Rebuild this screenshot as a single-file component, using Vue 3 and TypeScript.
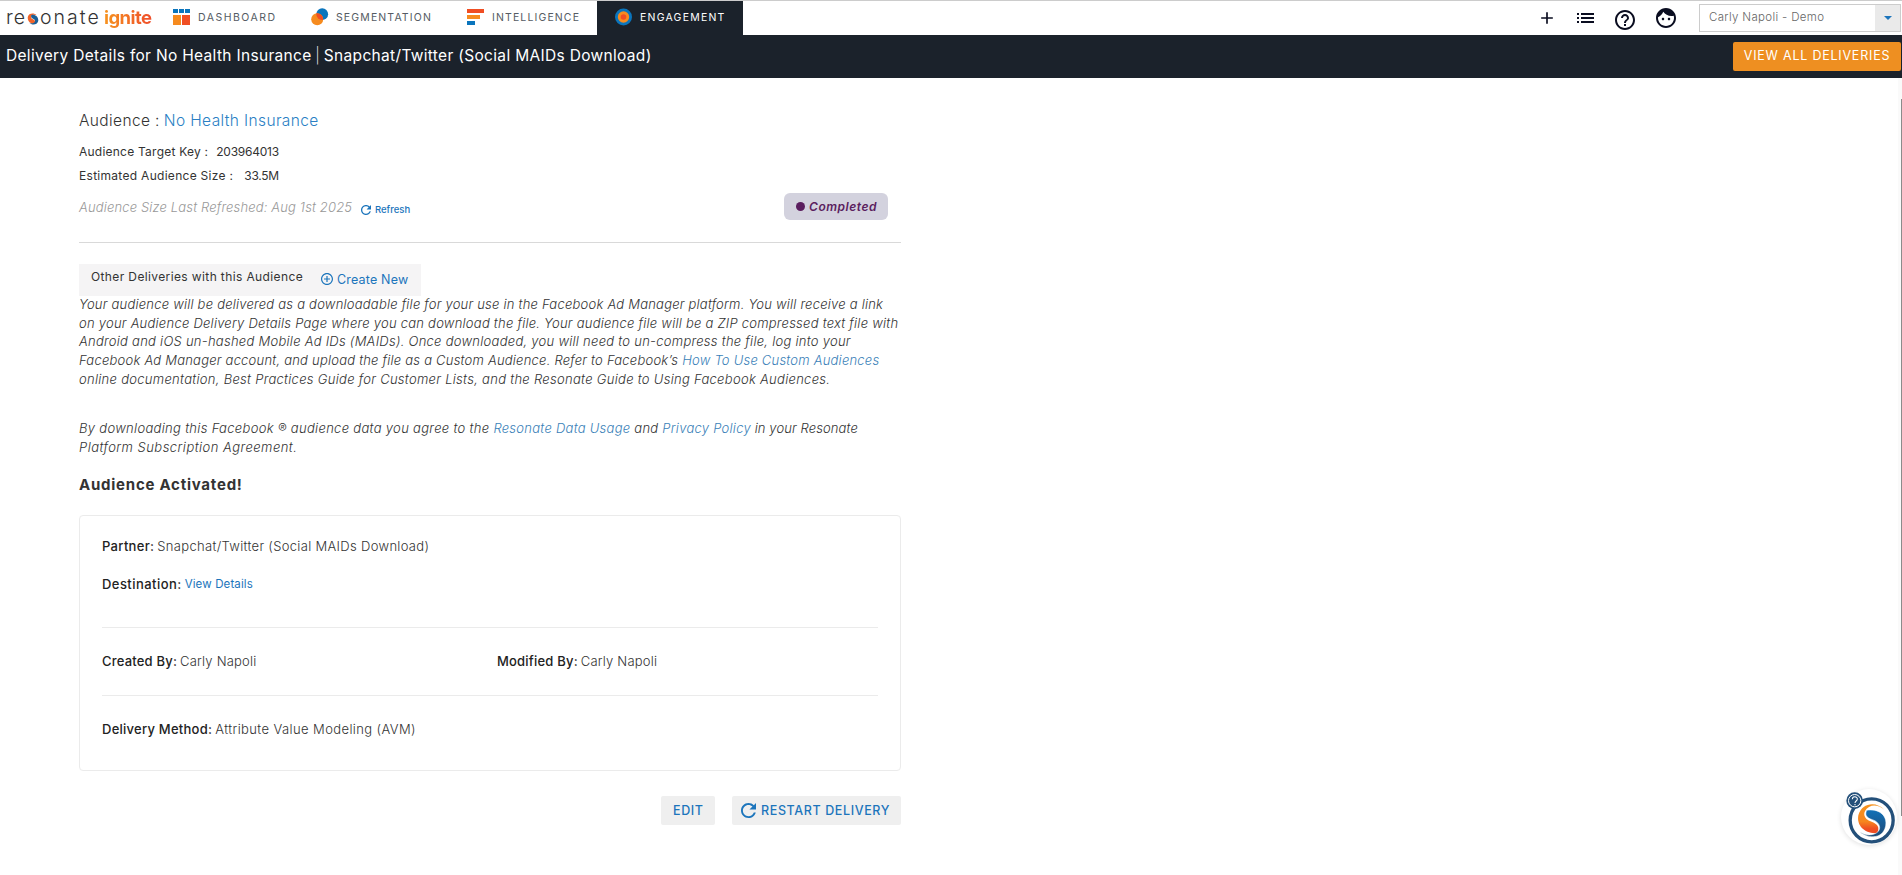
<script setup lang="ts">
interface NavItem {
  id: string
  label: string
  active?: boolean
}

const navItems: NavItem[] = [
  { id: 'dashboard', label: 'DASHBOARD' },
  { id: 'segmentation', label: 'SEGMENTATION' },
  { id: 'intelligence', label: 'INTELLIGENCE' },
  { id: 'engagement', label: 'ENGAGEMENT', active: true },
]

const audience = {
  name: 'No Health Insurance',
  key: '203964013',
  size: '33.5M',
  refreshed: 'Aug 1st 2025',
}

const user = 'Carly Napoli'
const partner = 'Snapchat/Twitter (Social MAIDs Download)'
</script>

<template>
  <div class="page">
    <header class="topbar">
      <div class="logo">
        <span class="logo-re">re</span>
        <svg class="logo-s" viewBox="150 90 118 122">
          <path fill="#f0642a" d="M246 112 C222 84 164 88 156 130 C150 174 190 208 225 200 C236 180 230 162 208 154 C184 146 182 124 200 112 C214 104 230 106 246 112Z" />
          <path fill="#1b5f96" transform="rotate(180 209 151)" d="M246 112 C222 84 164 88 156 130 C150 174 190 204 225 192 C232 174 228 162 208 154 C184 146 182 124 200 112 C214 104 230 106 246 112Z" />
        </svg>
        <span class="logo-onate">onate</span>
        <span class="logo-ignite">ignite</span>
      </div>

      <nav class="nav">
        <a v-for="item in navItems" :key="item.id" class="nav-item" :class="[item.id, { active: item.active }]">
          <svg class="nav-icon" viewBox="0 0 18 18">
            <g v-if="item.id === 'dashboard'">
              <path fill="#0a75bd" d="M0 1h5v4H0zM6 1h5v4H6zM12 1h5v4h-5z" />
              <path fill="#f68b1f" d="M0 7h8v10H0z" />
              <path fill="#f04e23" d="M9 7h8v10H9z" />
            </g>
            <g v-else-if="item.id === 'segmentation'">
              <circle cx="11.2" cy="6.2" r="5.9" fill="#0a75bd" />
              <circle cx="6.2" cy="11.2" r="6" fill="#f68b1f" />
              <path fill="#f04e23" d="M5.35 5.3A6 6 0 0 1 12.1 12A5.9 5.9 0 0 1 5.35 5.3Z" />
            </g>
            <g v-else-if="item.id === 'intelligence'">
              <path fill="#f04e23" d="M0 1h17v4H0z" />
              <path fill="#f68b1f" d="M0 7h13v4H0z" />
              <path fill="#0a75bd" d="M0 13h8v4H0z" />
            </g>
            <g v-else>
              <circle cx="8.5" cy="9" r="8.5" fill="#0a75bd" />
              <circle cx="8.5" cy="9" r="5.7" fill="#f68b1f" />
              <circle cx="8.5" cy="9" r="2.8" fill="#f04e23" />
            </g>
          </svg>
          <span>{{ item.label }}</span>
        </a>
      </nav>

      <div class="tools">
        <svg class="tool plus" viewBox="0 0 24 24"><path d="M19 13h-6v6h-2v-6H5v-2h6V5h2v6h6v2z" /></svg>
        <svg class="tool list" viewBox="0 0 17 10"><path d="M0 0h2v2H0zM0 4h2v2H0zM0 8h2v2H0zM4 0h13v2H4zM4 4h13v2H4zM4 8h13v2H4z" /></svg>
        <svg class="tool help" viewBox="2 2 20 20"><path d="M11 18h2v-2h-2v2zm1-16C6.48 2 2 6.48 2 12s4.48 10 10 10 10-4.480 10-10S17.520 2 12 2zm0 18c-4.410 0-8-3.590-8-8s3.590-8 8-8 8 3.590 8 8-3.590 8-8 8zm0-14c-2.210 0-4 1.790-4 4h2c0-1.100.9-2 2-2s2 .9 2 2c0 2-3 1.750-3 5h2c0-2.250 3-2.500 3-5 0-2.210-1.790-4-4-4z" /></svg>
        <svg class="tool face" viewBox="2 2 20 20"><path d="M9 11.750c-.69 0-1.250.56-1.250 1.250s.56 1.250 1.250 1.250 1.250-.56 1.250-1.250-.56-1.250-1.250-1.250zm6 0c-.69 0-1.250.56-1.250 1.250s.56 1.250 1.250 1.250 1.250-.56 1.250-1.250-.56-1.250-1.250-1.250zM12 2C6.480 2 2 6.480 2 12s4.480 10 10 10 10-4.480 10-10S17.520 2 12 2zm0 18c-4.410 0-8-3.590-8-8 0-.29.020-.58.050-.86 2.360-1.050 4.230-2.980 5.210-5.370C11.070 8.330 14.050 10 17.420 10c.78 0 1.530-.09 2.250-.26.21.71.33 1.470.33 2.260 0 4.410-3.590 8-8 8z" /></svg>
        <div class="select">
          <span class="select-text">{{ user }} - Demo</span>
          <span class="select-arrow"><svg viewBox="0 0 8 4"><path d="M0 0h8L4 4z" /></svg></span>
        </div>
      </div>
    </header>

    <div class="titlebar">
      <h1>Delivery Details for {{ audience.name }} <span class="bar">|</span> {{ partner }}</h1>
      <button class="view-all">VIEW ALL DELIVERIES</button>
    </div>

    <main class="content">
      <div class="row-audience">
        <span>Audience :</span>
        <a>{{ audience.name }}</a>
      </div>
      <div class="row-meta key">
        <span>Audience Target Key :</span>
        <span class="num">{{ audience.key }}</span>
      </div>
      <div class="row-meta size">
        <span>Estimated Audience Size :</span>
        <span class="num">{{ audience.size }}</span>
      </div>
      <div class="row-refresh">
        <em>Audience Size Last Refreshed: {{ audience.refreshed }}</em>
        <a class="refresh">
          <svg viewBox="4 4 16 16"><path d="M17.650 6.350C16.200 4.900 14.210 4 12 4c-4.420 0-7.990 3.580-7.990 8s3.570 8 7.990 8c3.730 0 6.840-2.550 7.730-6h-2.080c-.82 2.330-3.040 4-5.650 4-3.310 0-6-2.690-6-6s2.690-6 6-6c1.660 0 3.140.69 4.220 1.780L13 11h7V4l-2.350 2.350z" /></svg>
          <span>Refresh</span>
        </a>
        <span class="badge"><i class="dot"></i>Completed</span>
      </div>

      <div class="divider"></div>

      <div class="others">
        <span class="others-label">Other Deliveries with this Audience</span>
        <svg viewBox="2 2 20 20"><path d="M13 7h-2v4H7v2h4v4h2v-4h4v-2h-4V7zm-1-5C6.480 2 2 6.480 2 12s4.480 10 10 10 10-4.480 10-10S17.520 2 12 2zm0 18c-4.410 0-8-3.590-8-8s3.590-8 8-8 8 3.590 8 8-3.590 8-8 8z" /></svg>
        <a>Create New</a>
      </div>

      <p class="notes">
        <span class="s1">Your audience will be delivered as a downloadable file for your use in the Facebook Ad Manager platform. You will receive a link</span>
        <span class="s2">on your Audience Delivery Details Page where you can download the file. Your audience file will be a ZIP compressed text file with</span>
        <span class="s3">Android and iOS un-hashed Mobile Ad IDs (MAIDs). Once downloaded, you will need to un-compress the file, log into your</span>
        <span class="s1">Facebook Ad Manager account, and upload the file as a Custom Audience. Refer to Facebook’s <a>How To Use Custom Audiences</a></span>
        <span class="s4">online documentation, Best Practices Guide for Customer Lists, and the Resonate Guide to Using Facebook Audiences.</span>
      </p>
      <p class="notes terms">
        <span class="s3"><span class="s6">By downloading this Facebook ® audience data you agree to the </span><a>Resonate Data Usage</a> and <a>Privacy Policy</a><span class="s7"> in your Resonate</span></span>
        <span class="s5">Platform Subscription Agreement.</span>
      </p>

      <h2>Audience Activated!</h2>

      <section class="card">
        <div class="block first">
          <div class="field"><b class="w3">Partner:</b><span class="w3">{{ partner }}</span></div>
          <div class="field"><b class="w4">Destination:</b><a>View Details</a></div>
        </div>
        <div class="block people">
          <div class="field"><b class="w1">Created By:</b><span class="w1">{{ user }}</span></div>
          <div class="field"><b class="w1">Modified By:</b><span class="w1">{{ user }}</span></div>
        </div>
        <div class="block last">
          <div class="field"><b class="w2">Delivery Method:</b><span class="w5">Attribute Value Modeling (AVM)</span></div>
        </div>
      </section>

      <div class="actions">
        <button class="btn edit">EDIT</button>
        <button class="btn restart">
          <svg viewBox="4 4 16 16"><path d="M17.650 6.350C16.200 4.900 14.210 4 12 4c-4.420 0-7.990 3.580-7.990 8s3.570 8 7.990 8c3.730 0 6.840-2.550 7.730-6h-2.080c-.82 2.330-3.040 4-5.650 4-3.310 0-6-2.690-6-6s2.690-6 6-6c1.660 0 3.140.69 4.220 1.780L13 11h7V4l-2.350 2.350z" /></svg>
          <span>RESTART DELIVERY</span>
        </button>
      </div>
    </main>

    <div class="scrollbar"><i class="thumb"></i></div>

    <div class="helper">
      <svg viewBox="116 56 168 168">
        <defs>
          <linearGradient id="warm" x1="0" y1="0" x2="0" y2="1">
            <stop offset="0" stop-color="#f6931e" />
            <stop offset=".6" stop-color="#f6861f" />
            <stop offset=".85" stop-color="#ef4e23" />
          </linearGradient>
          <linearGradient id="cool" x1="0" y1="1" x2="0" y2="0">
            <stop offset="0" stop-color="#1271b8" />
            <stop offset="1" stop-color="#1f4a75" />
          </linearGradient>
        </defs>
        <circle cx="208" cy="150" r="64.500" fill="#fff" stroke="#24507a" stroke-width="10" />
        <path fill="url(#warm)" d="M246 118 C222 92 178 96 168 135 C162 168 190 192 225 188 C232 172 228 162 208 154 C182 146 178 124 200 110 C214 102 230 106 246 118Z" />
        <path fill="url(#cool)" stroke="#fff" stroke-width="1.500" transform="rotate(180 209 151)" d="M246 118 C228 100 178 90 168 135 C162 168 190 188 225 182 C230 170 228 160 208 154 C182 146 178 120 202 111 C216 106 230 108 246 118Z" />
        <circle cx="157" cy="91" r="25" fill="#24507a" />
        <circle cx="157" cy="91" r="18.500" fill="none" stroke="#fff" stroke-width="3" />
        <path d="M150 87c0-10 15-10 15-1 0 6-7 6-7 12M158 101v4" fill="none" stroke="#fff" stroke-width="3.200" />
      </svg>
    </div>
  </div>
</template>

<style>
body {
  margin: 0;
  background: #fff;
}
</style>

<style scoped>
.page {
  position: relative;
  width: 1902px;
  height: 875px;
  overflow: hidden;
  box-sizing: border-box;
  background: #fff;
  color: #333;
  font-family: Inter, "Open Sans", sans-serif;
}
.page * {
  box-sizing: border-box;
}
a {
  color: #1c75bc;
}
button {
  border: 0;
  font-family: inherit;
}
svg {
  display: block;
  flex: none;
}
span, em, b, h1, h2 {
  white-space: nowrap;
}

.topbar {
  display: flex;
  height: 35px;
  border-top: 1px solid #ccc;
}
.logo {
  display: flex;
  align-items: center;
  width: 160px;
  padding-left: 6px;
  line-height: 34px;
  color: #333;
}
.logo-re,
.logo-onate {
  font-size: 19.5px;
  font-weight: 300;
  height: 32px;
  line-height: 31px;
}
.logo-re {
  width: 21px;
  letter-spacing: 1px;
}
.logo-s {
  width: 12px;
  height: 12px;
  margin: 1px 1px 0 0;
}
.logo-onate {
  width: 64px;
  letter-spacing: 2px;
}
.logo-ignite {
  font-size: 18.500px;
  font-weight: 700;
  height: 34px;
  line-height: 32px;
  letter-spacing: -0.550px;
  background: linear-gradient(90deg, #f6931e, #ef4e2b);
  background-clip: text;
  -webkit-text-fill-color: transparent;
}
.nav {
  display: flex;
}
.nav-item {
  display: flex;
  align-items: center;
  height: 34px;
  padding-left: 13px;
  font-size: 10.500px;
  letter-spacing: 1.130px;
  color: #555b63;
}
.nav-item.dashboard {
  width: 138px;
  letter-spacing: 1.500px;
}
.nav-item.segmentation {
  width: 156px;
}
.nav-item.intelligence {
  width: 143px;
}
.nav-item.engagement {
  width: 146px;
  padding-left: 18px;
}
.nav-item.active {
  color: #fff;
  background: #1b222b;
  letter-spacing: 1.220px;
}
.nav-icon {
  width: 18px;
  height: 18px;
  margin: 0 7px 2px 0;
}
.nav-item span {
  line-height: 14px;
}
.tools {
  display: flex;
  align-items: center;
  margin-left: auto;
  padding-right: 1px;
}
.tool {
  fill: #0a0d20;
}
.plus {
  width: 20px;
  height: 20px;
}
.list {
  width: 17px;
  height: 10px;
  margin-left: 20px;
}
.help {
  width: 20px;
  height: 20px;
  margin: 4px 0 0 21px;
}
.face {
  width: 20px;
  height: 20px;
  margin: 0 0 0 21px;
}
.select {
  display: flex;
  width: 202px;
  height: 28px;
  margin-left: 23px;
  border: 1px solid #ccc;
}
.select-text {
  flex: 1;
  padding-left: 9px;
  line-height: 25px;
  font-size: 11.500px;
  font-weight: 300;
  letter-spacing: .34px;
  color: #666;
}
.select-arrow {
  display: flex;
  align-items: center;
  justify-content: center;
  width: 25px;
  background: #eaeaea;
}
.select-arrow svg {
  width: 8px;
  height: 4px;
  fill: #1c75bc;
}

.titlebar {
  display: flex;
  align-items: flex-start;
  justify-content: space-between;
  height: 43px;
  padding: 7px 1px 0 6px;
  background: #1b222b;
}
h1 {
  margin: 0;
  font-size: 15.500px;
  font-weight: 400;
  line-height: 28px;
  letter-spacing: .32px;
  color: #fff;
}
.bar {
  margin: 0 -1px;
  font-weight: 200;
}
.view-all {
  width: 168px;
  height: 29px;
  padding: 0 0 1px;
  border-radius: 2px;
  background: #ee8f21;
  color: #fff;
  font-size: 12.500px;
  line-height: 28px;
  letter-spacing: .78px;
}

.content {
  width: 822px;
  margin-left: 79px;
  padding-top: 32px;
}
.row-audience {
  display: flex;
  gap: 4px;
  height: 21px;
  line-height: 21px;
  font-size: 15.500px;
  font-weight: 300;
  letter-spacing: .38px;
}
.row-audience a {
  color: #2a7fc4;
}
.row-meta {
  display: flex;
  height: 20px;
  line-height: 20px;
  font-size: 12px;
}
.key {
  margin-top: 11px;
  gap: 8px;
  letter-spacing: .23px;
}
.size {
  margin-top: 4px;
  gap: 11px;
  letter-spacing: .29px;
}
.num {
  letter-spacing: -.25px;
}
.row-refresh {
  display: flex;
  align-items: center;
  height: 27px;
  margin-top: 7px;
}
.row-refresh em {
  width: 282px;
  padding-top: 2px;
  font-size: 13px;
  font-weight: 300;
  line-height: 27px;
  letter-spacing: .15px;
  color: #999;
}
.refresh {
  display: flex;
  align-items: center;
  gap: 4px;
  padding-top: 6px;
  font-size: 9.500px;
  font-weight: 500;
}
.refresh svg {
  width: 10px;
  height: 10px;
  fill: #1c75bc;
}
.badge {
  display: flex;
  align-items: center;
  width: 104px;
  height: 27px;
  margin: 0 13px 0 auto;
  padding: 0 0 1px 12px;
  border-radius: 6px;
  background: #d3d2de;
  color: #5b1e5f;
  font-size: 12px;
  font-weight: 600;
  font-style: italic;
  letter-spacing: .54px;
}
.dot {
  width: 9px;
  height: 9px;
  margin-right: 4px;
  border-radius: 50%;
  background: #5b1e5f;
}
.divider {
  height: 1px;
  margin-top: 22px;
  background: #d9d9d9;
}
.others {
  display: flex;
  align-items: center;
  width: 342px;
  height: 32px;
  margin-top: 21px;
  padding-left: 12px;
  background: #f5f4f5;
}
.others-label {
  width: 230px;
  margin-bottom: 8px;
  font-size: 12px;
  letter-spacing: .38px;
}
.others svg {
  width: 12px;
  height: 12px;
  margin: 0 4px 2px 0;
  fill: #1c75bc;
}
.others a {
  margin-bottom: 1px;
  font-size: 12.500px;
  letter-spacing: .18px;
}
.notes {
  margin: -1px 0 0;
  font-size: 13px;
  font-weight: 300;
  font-style: italic;
  line-height: 18.700px;
}
.notes > span {
  display: block;
}
.notes a {
  color: #3a7fb8;
}
.terms {
  margin-top: 30.900px;
}
.s1 { letter-spacing: .22px; }
.s2 { letter-spacing: .24px; }
.s3 { letter-spacing: .265px; }
.s4 { letter-spacing: .292px; }
.s5 { letter-spacing: .47px; }
.s6 { letter-spacing: .31px; white-space: pre-wrap; }
.s7 { letter-spacing: .1px; }
h2 {
  margin: 17.700px 0 0;
  font-size: 15px;
  font-weight: 700;
  line-height: 20px;
  letter-spacing: .76px;
}

.card {
  height: 256px;
  margin-top: 20.500px;
  padding: 0 22px;
  border: 1px solid #ebebeb;
  border-radius: 4px;
}
.block {
  height: 68px;
  border-bottom: 1px solid #ebebeb;
}
.first {
  display: flex;
  flex-direction: column;
  gap: 18px;
  height: 112px;
  padding-top: 20px;
}
.people {
  display: grid;
  grid-template-columns: 395px 1fr;
  align-items: center;
  padding-bottom: 2px;
}
.last {
  display: flex;
  align-items: center;
  height: 65px;
  border-bottom: 0;
}
.field {
  display: flex;
  gap: 3px;
  height: 20px;
  line-height: 20px;
  font-size: 13px;
  font-weight: 300;
}
.field b {
  font-weight: 500;
  color: #222;
}
.field a {
  font-size: 11.500px;
  font-weight: 400;
  letter-spacing: .13px;
}
.w1 { letter-spacing: .2px; }
.w2 { letter-spacing: .25px; }
.w3 { letter-spacing: .32px; }
.w4 { letter-spacing: .45px; }
.w5 { letter-spacing: .4px; }

.actions {
  display: flex;
  justify-content: flex-end;
  gap: 17px;
  margin-top: 25px;
}
.btn {
  display: flex;
  align-items: center;
  height: 29px;
  padding: 0;
  border-radius: 2px;
  background: #efefef;
  color: #1c75bc;
  font-size: 12.500px;
  font-weight: 500;
  letter-spacing: .62px;
}
.edit {
  width: 54px;
  padding-left: 12px;
}
.restart {
  width: 169px;
  gap: 5px;
  padding-left: 9px;
}
.restart svg {
  width: 15px;
  height: 15px;
  fill: #1c75bc;
}

.scrollbar {
  position: absolute;
  top: 78px;
  right: 0;
  width: 4px;
  height: 797px;
  padding: 21px 0 0 3px;
  background: #fafafa;
}
.thumb {
  display: block;
  height: 717px;
  background: #8b8b8b;
}
.helper {
  position: absolute;
  left: 1841px;
  top: 789px;
  width: 56px;
  height: 56px;
  border-radius: 50%;
  background: #fff;
  box-shadow: 0 1px 5px rgba(0, 0, 0, .12);
}
</style>
